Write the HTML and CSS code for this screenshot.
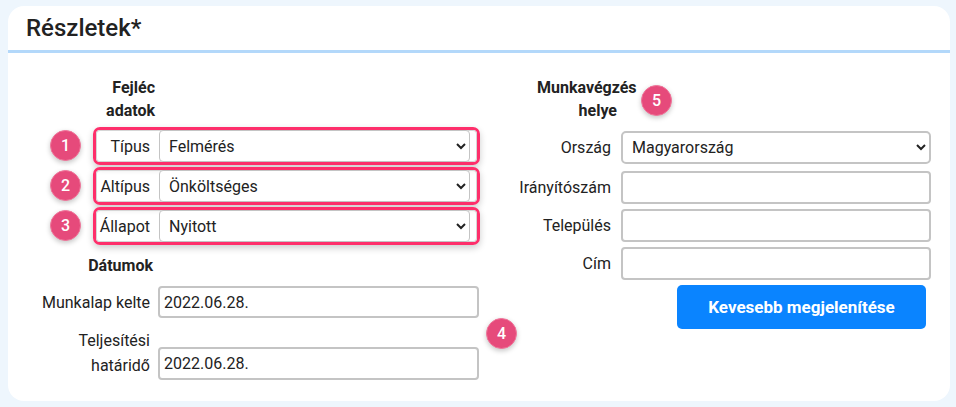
FILE: index.html
```html
<!DOCTYPE html>
<html lang="hu">
<head>
  <meta charset="UTF-8">
  <meta name="viewport" content="width=device-width, initial-scale=1.0">
  <title>Részletek</title>
  <link rel="stylesheet" href="styles.css">
</head>
<body>
  <div class="card">
    <div class="card-head">
      <h1>Részletek*</h1>
    </div>

    <div class="card-body">
      <div class="col col-left">
        <div class="group-title">Fejléc<br>adatok</div>

        <div class="hl-row">
          <span class="badge">1</span>
          <div class="hl-inner">
            <label for="tipus">Típus</label>
            <select id="tipus">
              <option>Felmérés</option>
            </select>
          </div>
        </div>
        <div class="hl-row">
          <span class="badge">2</span>
          <div class="hl-inner">
            <label for="altipus">Altípus</label>
            <select id="altipus">
              <option>Önköltséges</option>
            </select>
          </div>
        </div>
        <div class="hl-row">
          <span class="badge">3</span>
          <div class="hl-inner">
            <label for="allapot">Állapot</label>
            <select id="allapot">
              <option>Nyitott</option>
            </select>
          </div>
        </div>

        <div class="group-title dates">Dátumok</div>

        <div class="row">
          <label for="kelte">Munkalap kelte</label>
          <input type="text" id="kelte" value="2022.06.28.">
        </div>
        <div class="row row-tall">
          <label for="hatarido">Teljesítési<br>határidő</label>
          <input type="text" id="hatarido" value="2022.06.28.">
        </div>
      </div>

      <div class="col col-right">
        <div class="group-title place">Munkavégzés helye</div>

        <div class="row first">
          <label for="orszag">Ország</label>
          <select id="orszag">
            <option>Magyarország</option>
          </select>
        </div>
        <div class="row">
          <label for="irsz">Irányítószám</label>
          <input type="text" id="irsz">
        </div>
        <div class="row">
          <label for="telepules">Település</label>
          <input type="text" id="telepules">
        </div>
        <div class="row">
          <label for="cim">Cím</label>
          <input type="text" id="cim">
        </div>

        <button class="btn">Kevesebb megjelenítése</button>
      </div>

      <span class="badge badge-4">4</span>
      <span class="badge badge-5">5</span>
    </div>
  </div>
</body>
</html>
```

FILE: styles.css
```css
body {
  font-family: Roboto, "Liberation Sans", Arial, sans-serif;
  background-color: #eef6fd;
  margin: 0;
  padding: 0;
  color: #222;
}
.card {
  margin: 6px 6px 6px 8px;
  width: 942px;
  height: 395px;
  background: #fff;
  border-radius: 16px;
}
.card-head {
  height: 44px;
  border-bottom: 3px solid #b3d8fa;
  display: flex;
  align-items: center;
  padding-left: 18px;
}
.card-head h1 {
  margin: 0;
  font-size: 24px;
  font-weight: 500;
  color: #222;
}
.card-body {
  position: relative;
  display: flex;
  padding-top: 23px;
}
.col-left {
  width: 482px;
}
.col-right {
  width: 460px;
}
.group-title {
  width: 147px;
  text-align: right;
  font-size: 16px;
  font-weight: bold;
  line-height: 23px;
}
.group-title.dates {
  width: 145px;
  margin-top: 9px;
}
.group-title.place {
  width: 80px;
  margin-left: 47px;
}
label {
  font-size: 16px;
  text-align: right;
  line-height: 25px;
}
select, input[type="text"] {
  box-sizing: border-box;
  height: 32px;
  font-family: Roboto, "Liberation Sans", Arial, sans-serif;
  font-size: 16px;
  color: #222;
  background: #fff;
  border: 1px solid #c4c4c4;
  border-radius: 4px;
  margin: 0;
}
select {
  padding: 0 5px;
}
input[type="text"] {
  border-width: 2px;
  padding: 0 4px;
}

/* kiemelt sorok */
.hl-row {
  position: relative;
  box-sizing: border-box;
  width: 387px;
  height: 38px;
  margin-left: 85px;
  margin-top: 2px;
  border: 3px solid #fe2f6b;
  border-radius: 7px;
  box-shadow: 0 3px 7px rgba(0, 0, 0, 0.2);
}
.group-title + .hl-row {
  margin-top: 5px;
}
.hl-inner {
  display: flex;
  align-items: center;
  gap: 9px;
  height: 100%;
  border-radius: 4px;
  box-shadow: inset 0 0 0 1px #d6d6d6;
}
.hl-inner label {
  width: 54px;
}
.hl-inner select {
  width: 311px;
}

.row {
  display: flex;
  align-items: center;
  margin-top: 9px;
}
.row label {
  width: 142px;
  margin-right: 8px;
}
.row input {
  width: 321px;
}
.row-tall {
  align-items: flex-end;
  margin-top: 10px;
}
.row-tall input {
  height: 33px;
}
.row-tall label {
  margin-bottom: 2px;
}
.col-left .row:first-of-type {
  margin-top: 11px;
}
.col-right .row {
  margin-top: 5px;
}
.col-right .row.first {
  margin-top: 9px;
}
.col-right .row.first + .row {
  margin-top: 7px;
}
.col-right .row label {
  width: 121px;
  margin-right: 10px;
}
.col-right .row select,
.col-right .row input {
  width: 310px;
  height: 33px;
}
.col-right .row select {
  border-width: 2px;
  border-radius: 5px;
}

.btn {
  margin-top: 5px;
  margin-left: 187px;
  width: 249px;
  height: 44px;
  background-color: #0a84ff;
  color: #fff;
  border: none;
  border-radius: 5px;
  font-family: Roboto, "Liberation Sans", Arial, sans-serif;
  font-size: 17px;
  font-weight: bold;
  cursor: pointer;
}
.btn:hover {
  background-color: #0074e0;
}

.badge {
  position: absolute;
  box-sizing: border-box;
  width: 31px;
  height: 31px;
  border-radius: 50%;
  background: #e64a7b;
  border: 1px solid #f07499;
  box-shadow: 0 2px 5px rgba(0, 0, 0, 0.22);
  color: #fff;
  font-size: 16px;
  font-weight: 500;
  display: flex;
  align-items: center;
  justify-content: center;
}
.hl-row .badge {
  left: -46px;
  top: 0;
}
.badge-4 {
  left: 478px;
  top: 265px;
}
.badge-5 {
  left: 633px;
  top: 32px;
}
```
